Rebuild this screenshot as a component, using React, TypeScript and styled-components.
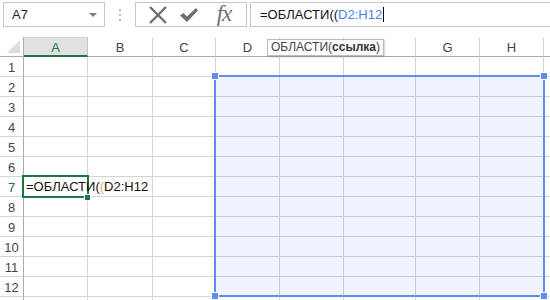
import React from "react";
import styled, { createGlobalStyle } from "styled-components";

const GlobalStyle = createGlobalStyle`
  html, body {
    margin: 0;
    padding: 0;
    background: #ffffff;
    overflow: hidden;
  }
  body {
    font-family: "Liberation Sans", Arial, sans-serif;
  }
`;

const Page = styled.div`
  width: 550px;
  height: 300px;
  overflow: hidden;
  background: #fff;
`;

const Toolbar = styled.div`
  display: flex;
  align-items: flex-start;
  height: 29px;
  padding: 2px 0 0 3px;
  box-sizing: border-box;
  margin-bottom: 8px;
`;

const NameBox = styled.div`
  position: relative;
  width: 102px;
  height: 25px;
  box-sizing: border-box;
  border: 1px solid #c6c6c6;
  display: flex;
  align-items: center;
  padding-left: 8px;
  font-size: 13px;
  color: #222;
`;

const DropArrow = styled.span`
  position: absolute;
  right: 7px;
  top: 10px;
  width: 0;
  height: 0;
  border-left: 4px solid transparent;
  border-right: 4px solid transparent;
  border-top: 4px solid #7a7a7a;
`;

const Grip = styled.div`
  width: 30px;
  height: 25px;
  display: flex;
  flex-direction: column;
  align-items: center;
  justify-content: center;
  gap: 3px;
  span {
    width: 2px;
    height: 2px;
    background: #b5b5b5;
  }
`;

const FxBox = styled.div`
  width: 112px;
  height: 25px;
  box-sizing: border-box;
  border: 1px solid #c6c6c6;
  display: flex;
  align-items: center;
  padding-left: 7px;
`;

const IconSlot = styled.div<{ $w: number }>`
  width: ${(p) => p.$w}px;
  height: 23px;
  display: flex;
  align-items: center;
  justify-content: center;
`;

const FxText = styled.span`
  font-family: "Liberation Serif", "Times New Roman", serif;
  font-style: italic;
  font-size: 23px;
  color: #6f6f6f;
  line-height: 1;
  margin-top: -3px;
  letter-spacing: -1px;
`;

const FormulaInput = styled.div`
  flex: 1;
  margin-left: 3px;
  height: 25px;
  box-sizing: border-box;
  border: 1px solid #c6c6c6;
  border-right: none;
  display: flex;
  align-items: center;
  padding-left: 9px;
  font-size: 13px;
  color: #111;
  white-space: nowrap;
`;

const Ref = styled.span<{ $color: string }>`
  color: ${(p) => p.$color};
`;

const Caret = styled.span`
  display: inline-block;
  width: 1px;
  height: 15px;
  background: #000;
  margin-left: 1px;
  vertical-align: middle;
`;

const Sheet = styled.div`
  position: relative;
  display: grid;
  grid-template-columns: 24px 64px 65px 63px 64px 64px 72px 64px 64px 20px;
  grid-auto-rows: 20px;
`;

const Corner = styled.div`
  box-sizing: border-box;
  border-right: 1px solid #ababab;
  border-bottom: 1px solid #ababab;
  position: relative;
  &::after {
    content: "";
    position: absolute;
    right: 3px;
    bottom: 3px;
    width: 0;
    height: 0;
    border-left: 13px solid transparent;
    border-bottom: 13px solid #dcdcdc;
  }
`;

const ColHead = styled.div<{ $active?: boolean }>`
  box-sizing: border-box;
  display: flex;
  align-items: center;
  justify-content: center;
  font-size: 13px;
  color: ${(p) => (p.$active ? "#217346" : "#444")};
  background: ${(p) => (p.$active ? "#e1e1e1" : "#fff")};
  border-right: 1px solid ${(p) => (p.$active ? "#c6c6c6" : "#d4d4d4")};
  border-top: 1px solid ${(p) => (p.$active ? "#d4d4d4" : "transparent")};
  border-bottom: ${(p) => (p.$active ? "2px solid #217346" : "1px solid #ababab")};
  padding-top: 1px;
`;

const RowHead = styled.div<{ $active?: boolean }>`
  box-sizing: border-box;
  display: flex;
  align-items: center;
  justify-content: center;
  font-size: 13px;
  color: ${(p) => (p.$active ? "#217346" : "#444")};
  border-right: 1px solid #ababab;
  border-bottom: 1px solid #d4d4d4;
  padding-top: 2px;
`;

const Cell = styled.div`
  box-sizing: border-box;
  border-right: 1px solid #d4d4d4;
  border-bottom: 1px solid #d4d4d4;
  position: relative;
`;

const CellText = styled.div`
  position: absolute;
  left: 2px;
  top: 2px;
  font-size: 13px;
  color: #111;
  white-space: nowrap;
  z-index: 3;
`;

const Selection = styled.div`
  position: absolute;
  left: 214px;
  top: 38px;
  width: 331px;
  height: 222px;
  box-sizing: border-box;
  border: 2px solid #5f8def;
  background: rgba(80, 120, 235, 0.09);
  pointer-events: none;
`;

const Handle = styled.span<{ $x: "left" | "right"; $y: "top" | "bottom" }>`
  position: absolute;
  ${(p) => p.$x}: -4px;
  ${(p) => p.$y}: -4px;
  width: 6px;
  height: 6px;
  background: #5f8def;
  border: 1px solid #fff;
  box-sizing: content-box;
  margin: -1px;
`;

const ActiveCell = styled.div`
  position: absolute;
  left: 22px;
  top: 138px;
  width: 67px;
  height: 23px;
  box-sizing: border-box;
  border: 2px solid #217346;
  z-index: 2;
  pointer-events: none;
`;

const FillHandle = styled.span`
  position: absolute;
  right: -4px;
  bottom: -5px;
  width: 5px;
  height: 5px;
  background: #217346;
  border: 1px solid #fff;
`;

const Tip = styled.div`
  position: absolute;
  left: 267px;
  top: 2px;
  height: 17px;
  box-sizing: border-box;
  padding: 0 3px 0 3px;
  background: #fff;
  border: 1px solid #bdbdbd;
  box-shadow: 1px 1px 2px rgba(0, 0, 0, 0.18);
  font-size: 12px;
  line-height: 15px;
  color: #444;
  white-space: nowrap;
  z-index: 4;
  b {
    color: #333;
  }
`;

const columns = ["A", "B", "C", "D", "E", "F", "G", "H", ""];
const rows = Array.from({ length: 13 }, (_, i) => i + 1);

const CrossIcon = () => (
  <svg width="22" height="20" viewBox="0 0 22 20">
    <path d="M3 2 L19 18 M19 2 L3 18" stroke="#6f6f6f" strokeWidth="2.4" fill="none" />
  </svg>
);

const CheckIcon = () => (
  <svg width="22" height="20" viewBox="0 0 22 20">
    <path d="M2 10.5 L5.5 8 L9 11.5 L18 3 L20 5.5 L9 17 Z" fill="#6f6f6f" />
  </svg>
);

export default function App() {
  return (
    <Page>
      <GlobalStyle />
      <Toolbar>
        <NameBox>
          A7
          <DropArrow />
        </NameBox>
        <Grip>
          <span />
          <span />
          <span />
        </Grip>
        <FxBox>
          <IconSlot $w={30}>
            <CrossIcon />
          </IconSlot>
          <IconSlot $w={32}>
            <CheckIcon />
          </IconSlot>
          <IconSlot $w={38}>
            <FxText>fx</FxText>
          </IconSlot>
        </FxBox>
        <FormulaInput>
          =ОБЛАСТИ((<Ref $color="#4f7fe6">D2:H12</Ref>
          <Caret />
        </FormulaInput>
      </Toolbar>

      <Sheet>
        <Corner />
        {columns.map((c, i) => (
          <ColHead key={c + i} $active={c === "A"}>
            {c === "E" || c === "F" ? "" : c}
          </ColHead>
        ))}
        {rows.map((r) => (
          <React.Fragment key={r}>
            <RowHead $active={r === 7}>{r < 13 ? r : ""}</RowHead>
            {columns.map((c, i) => (
              <Cell key={c + i}>
                {r === 7 && c === "A" && (
                  <CellText>
                    =ОБЛАСТИ(<Ref $color="#f0a868">(</Ref>D2:H12
                  </CellText>
                )}
              </Cell>
            ))}
          </React.Fragment>
        ))}

        <Tip>
          ОБЛАСТИ(<b>ссылка</b>)
        </Tip>

        <Selection>
          <Handle $x="left" $y="top" />
          <Handle $x="right" $y="top" />
          <Handle $x="left" $y="bottom" />
          <Handle $x="right" $y="bottom" />
        </Selection>

        <ActiveCell>
          <FillHandle />
        </ActiveCell>
      </Sheet>
    </Page>
  );
}
